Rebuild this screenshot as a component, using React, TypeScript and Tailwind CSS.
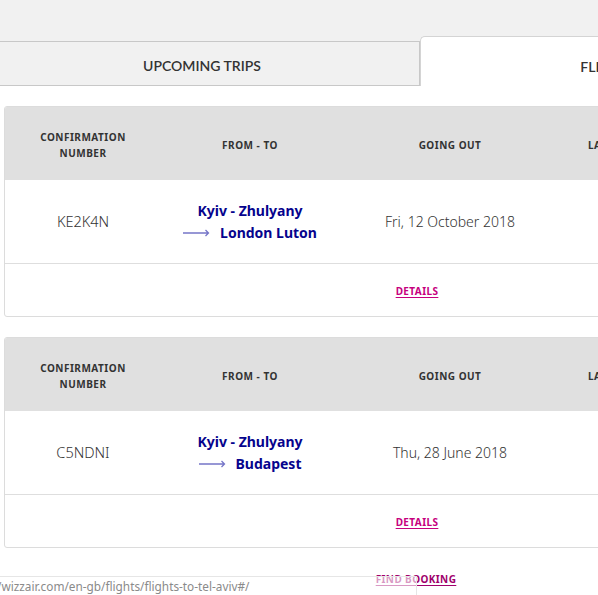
const bookings = [
  { code: "KE2K4N", from: "Kyiv - Zhulyany", to: "London Luton", date: "Fri, 12 October 2018" },
  { code: "C5NDNI", from: "Kyiv - Zhulyany", to: "Budapest", date: "Thu, 28 June 2018" }
];

function BookingCard({ booking }: { booking: (typeof bookings)[number] }) {
  return (
    <div className="overflow-hidden rounded-[3px] border border-[#dcdcdc] bg-white">
      <div className="flex h-[73px] items-center bg-[#e0e0e0] pt-[2px] text-[10px] font-bold uppercase leading-4 tracking-[0.5px] text-[#333]">
        <div className="w-[156px] text-center">
          Confirmation
          <br />
          Number
        </div>
        <div className="w-[178px] text-center">From - To</div>
        <div className="w-[222px] text-center">Going out</div>
        <div className="pl-[27px]">Last name</div>
      </div>
      <div className="flex h-[84px] items-center border-b border-[#dedede]">
        <div className="w-[156px] text-center text-[14.5px] font-light text-[#333]">{booking.code}</div>
        <div className="w-[178px] text-center text-[14px] font-bold leading-[22px] text-[#06038d]">
          <div>{booking.from}</div>
          <div className="flex items-center justify-center gap-[10px]">
            <svg width="27" height="8" viewBox="0 0 27 8" className="mt-[1px]">
              <path d="M0 4H25.5M22.5 1L25.5 4L22.5 7" fill="none" stroke="#7575c8" strokeWidth="1.3" />
            </svg>
            <span>{booking.to}</span>
          </div>
        </div>
        <div className="w-[222px] text-center text-[14px] font-light text-[#333]">{booking.date}</div>
      </div>
      <div className="flex h-[52px] items-center pb-[2px]">
        <div className="w-[824px] text-center">
          <a href="#" className="text-[10px] font-bold uppercase tracking-[0.4px] text-[#c6007e] underline underline-offset-2">
            Details
          </a>
        </div>
      </div>
    </div>
  );
}

export default function App() {
  return (
    <div className="relative h-[595px] w-[598px] overflow-hidden bg-white font-['Noto_Sans',sans-serif]">
      <div className="w-[860px]">
        <div className="flex h-[86px] items-end bg-[#f1f1f1]">
          <div className="ml-[-15px] flex h-[45px] w-[435px] items-center justify-center border-y border-r border-[#c8c8c8] bg-[#f1f1f1] pt-[3px] font-['Lato',sans-serif] text-[14px] font-semibold text-[#333]">
            UPCOMING TRIPS
          </div>
          <div className="flex h-[50px] w-[430px] items-center justify-center rounded-tl-[5px] border-l border-t border-[#d4d4d4] bg-white pt-[10px] font-['Lato',sans-serif] text-[14px] font-semibold text-[#333]">
            FLIGHT HISTORY
          </div>
        </div>
        <div className="flex flex-col gap-[20px] pl-[4px] pt-[20px]">
          {bookings.map((b) => (
            <div key={b.code} className="w-[826px]">
              <BookingCard booking={b} />
            </div>
          ))}
        </div>
        <div className="w-[832px] pt-[17px] text-center">
          <a href="#" className="text-[10px] font-bold uppercase tracking-[0.4px] text-[#a0006c] underline underline-offset-2">
            Find booking
          </a>
        </div>
      </div>
      <div className="absolute bottom-0 left-0 h-[19px] w-[417px] border-r border-t border-[#e6e6e6] bg-white/60 text-[11.8px] leading-[19px] text-[#8a8a8a]">
        <span className="ml-[-3px]">/wizzair.com/en-gb/flights/flights-to-tel-aviv#/</span>
      </div>
    </div>
  );
}
